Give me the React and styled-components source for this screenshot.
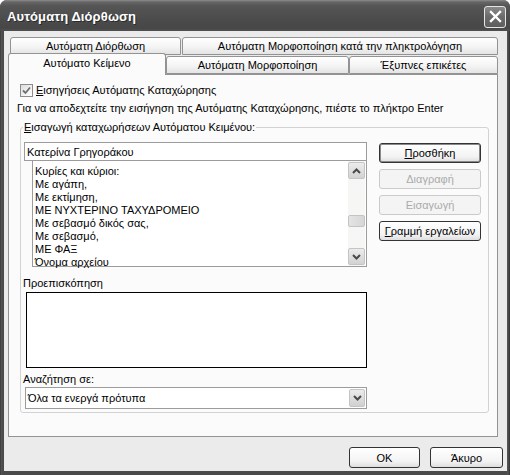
import styled, { createGlobalStyle } from 'styled-components';

const GlobalStyle = createGlobalStyle`
  html, body {
    margin: 0;
    padding: 0;
    background: #ffffff;
  }
  body {
    font-family: "Liberation Sans", "DejaVu Sans", sans-serif;
    font-size: 11px;
    color: #000;
  }
  * { box-sizing: border-box; }
`;

const entries = [
  'Κυρίες και κύριοι:',
  'Με αγάπη,',
  'Με εκτίμηση,',
  'ΜΕ ΝΥΧΤΕΡΙΝΟ ΤΑΧΥΔΡΟΜΕΙΟ',
  'Με σεβασμό δικός σας,',
  'Με σεβασμό,',
  'ΜΕ ΦΑΞ',
  'Όνομα αρχείου',
];

function Chevron({ down }) {
  return (
    <svg width="9" height="6" viewBox="0 0 9 6">
      <polyline
        points={down ? '1,1 4.5,4.5 8,1' : '1,5 4.5,1.5 8,5'}
        fill="none"
        stroke="#4a4a4a"
        strokeWidth="2"
      />
    </svg>
  );
}

function App() {
  return (
    <>
      <GlobalStyle />
      <Window>
        <TitleBar>
          <Title>Αυτόματη Διόρθωση</Title>
          <CloseButton>
            <svg width="13" height="13" viewBox="0 0 13 13">
              <path d="M2 2 L11 11 M11 2 L2 11" stroke="#fff" strokeWidth="2.4" strokeLinecap="square" />
            </svg>
          </CloseButton>
        </TitleBar>

        <Body>
          <TabRow>
            <Tab $w={171}>Αυτόματη Διόρθωση</Tab>
            <Tab $w={316}>Αυτόματη Μορφοποίηση κατά την πληκτρολόγηση</Tab>
          </TabRow>
          <TabRow $front>
            <Tab $w={158} $active>Αυτόματο Κείμενο</Tab>
            <Tab $w={183}>Αυτόματη Μορφοποίηση</Tab>
            <Tab $w={149}>Έξυπνες επικέτες</Tab>
          </TabRow>

          <Panel>
            <CheckRow>
              <CheckBox>
                <svg width="9" height="9" viewBox="0 0 9 9">
                  <polyline points="1,4.5 3.5,7 8,1.5" fill="none" stroke="#707070" strokeWidth="1.8" />
                </svg>
              </CheckBox>
              <span><u>Ε</u>ισηγήσεις Αυτόματης Καταχώρησης</span>
            </CheckRow>
            <Hint>Για να αποδεχτείτε την εισήγηση της Αυτόματης Καταχώρησης, πιέστε το πλήκτρο Enter</Hint>

            <Group>
              <Legend><u>Ε</u>ισαγωγή καταχωρήσεων Αυτόματου Κειμένου:</Legend>
              <GroupGrid>
                <LeftCol>
                  <TextField>Κατερίνα Γρηγοράκου</TextField>
                  <ListBox>
                    <Items>
                      {entries.map((e) => (
                        <Item key={e}>{e}</Item>
                      ))}
                    </Items>
                    <ScrollBar>
                      <ScrollArrow><Chevron /></ScrollArrow>
                      <Track>
                        <Thumb $offset={36} />
                      </Track>
                      <ScrollArrow><Chevron down /></ScrollArrow>
                    </ScrollBar>
                  </ListBox>
                  <FieldLabel $gap={10}>Προεπισκόπηση</FieldLabel>
                  <Preview />
                  <FieldLabel $gap={5}>Αναζήτηση σε:</FieldLabel>
                  <Combo>
                    <span>Όλα τα ενεργά πρότυπα</span>
                    <DropButton><Chevron down /></DropButton>
                  </Combo>
                </LeftCol>
                <RightCol>
                  <Button $default><u>Π</u>ροσθήκη</Button>
                  <Button disabled>Διαγραφή</Button>
                  <Button disabled>Εισαγωγή</Button>
                  <Button><u>Γ</u>ραμμή εργαλείων</Button>
                </RightCol>
              </GroupGrid>
            </Group>
          </Panel>

          <Footer>
            <Button $w={71} $h={21}>OK</Button>
            <Button $w={73} $h={21}>Άκυρο</Button>
          </Footer>
        </Body>
      </Window>
    </>
  );
}

export default App;

/* ---------- window chrome ---------- */

const Window = styled.div`
  width: 510px;
  height: 475px;
  display: flex;
  flex-direction: column;
  background: linear-gradient(to right, #2e2e2e 0, #555 1px, #4a4a4a 3px, #4a4a4a 506px, #555 508px, #2e2e2e 510px);
  border-radius: 7px 7px 0 0;
  overflow: hidden;
`;

const TitleBar = styled.div`
  height: 31px;
  flex: none;
  display: flex;
  align-items: center;
  justify-content: space-between;
  padding: 2px 4px 0 7px;
  background: linear-gradient(to bottom, #8c8c8c 0, #666 2px, #555 6px, #4b4b4b 20px, #474747 28px, #505050 31px);
`;

const Title = styled.div`
  color: #fff;
  font-weight: bold;
  font-size: 13px;
  text-shadow: 1px 1px 0 #2a2a2a;
  letter-spacing: 0.1px;
`;

const CloseButton = styled.div`
  width: 22px;
  height: 22px;
  display: flex;
  align-items: center;
  justify-content: center;
  border: 1px solid #e6e6e6;
  border-radius: 3px;
  background: linear-gradient(to bottom, #8a8a8a, #6a6a6a 50%, #5e5e5e);
`;

const Body = styled.div`
  flex: 1;
  margin: 0 3px 4px 4px;
  padding: 6px 4px 0 4px;
  background: #ebebeb;
  display: flex;
  flex-direction: column;
`;

/* ---------- tabs ---------- */

const TabRow = styled.div`
  display: flex;
  align-items: flex-end;
  gap: ${(p) => (p.$front ? '0' : '1px')};
  height: ${(p) => (p.$front ? '21px' : '18px')};
  margin-top: ${(p) => (p.$front ? '-2px' : '0')};
  padding-left: ${(p) => (p.$front ? '0' : '2px')};
  position: relative;
  z-index: ${(p) => (p.$front ? 2 : 1)};
`;

const Tab = styled.div`
  width: ${(p) => p.$w}px;
  height: ${(p) => (p.$active ? '22px' : p.$w && p.$w > 0 ? '18px' : '18px')};
  margin-bottom: ${(p) => (p.$active ? '-1px' : '0')};
  border: 1px solid #939393;
  border-bottom: ${(p) => (p.$active ? 'none' : '1px solid #939393')};
  border-radius: 3px 3px 0 0;
  background: ${(p) =>
    p.$active ? '#fbfbfb' : 'linear-gradient(to bottom, #ffffff, #f4f4f4 55%, #e4e4e4)'};
  display: flex;
  align-items: center;
  justify-content: center;
  padding-bottom: ${(p) => (p.$active ? '3px' : '0')};
  white-space: nowrap;
  position: relative;
  z-index: ${(p) => (p.$active ? 3 : 1)};
`;

const Panel = styled.div`
  width: 490px;
  height: 363px;
  flex: none;
  border: 1px solid #939393;
  background: #fbfbfb;
  padding: 9px 8px 0 8px;
`;

/* ---------- panel content ---------- */

const CheckRow = styled.div`
  display: flex;
  align-items: center;
  gap: 3px;
  height: 13px;
  margin-left: 3px;
  line-height: 13px;
`;

const CheckBox = styled.div`
  width: 13px;
  height: 13px;
  border: 1px solid #8c8c8c;
  background: linear-gradient(135deg, #dcdcdc, #f6f6f6 70%, #fff);
  display: flex;
  align-items: center;
  justify-content: center;
`;

const Hint = styled.div`
  margin-top: 5px;
  line-height: 13px;
  white-space: nowrap;
`;

const Group = styled.fieldset`
  margin: 6px 0 0 3px;
  width: 469px;
  padding: 0 3px 3px 3px;
  border: 1px solid #d2d2d2;
  border-radius: 3px;
  min-width: 0;
`;

const Legend = styled.legend`
  padding: 0 1px;
  margin-left: -1px;
  line-height: 13px;
  color: #000;
`;

const GroupGrid = styled.div`
  display: grid;
  grid-template-columns: 343px 102px;
  column-gap: 12px;
  padding-top: 8px;
`;

const LeftCol = styled.div`
  display: flex;
  flex-direction: column;
`;

const RightCol = styled.div`
  display: flex;
  flex-direction: column;
  gap: 6px;
  padding-top: 1px;
`;

const TextField = styled.div`
  height: 19px;
  border: 1px solid #9c9c9c;
  background: #fff;
  padding-left: 2px;
  display: flex;
  align-items: center;
`;

const ListBox = styled.div`
  height: 106px;
  margin-left: 8px;
  border: 1px solid #9c9c9c;
  border-top: none;
  background: #fff;
  display: flex;
`;

const Items = styled.div`
  flex: 1;
  padding: 4px 0 0 2px;
`;

const Item = styled.div`
  height: 13px;
  line-height: 13px;
  white-space: nowrap;
`;

const ScrollBar = styled.div`
  width: 17px;
  display: flex;
  flex-direction: column;
  padding: 1px 0;
  margin-right: 1px;
  background: #f6f6f4;
`;

const ScrollArrow = styled.div`
  width: 17px;
  height: 17px;
  border: 1px solid #c4c4c4;
  border-radius: 2px;
  background: linear-gradient(to bottom, #ececec, #d2d2d2);
  display: flex;
  align-items: center;
  justify-content: center;
`;

const Track = styled.div`
  flex: 1;
`;

const Thumb = styled.div`
  margin-top: ${(p) => p.$offset}px;
  height: 12px;
  border: 1px solid #c4c4c4;
  border-radius: 2px;
  background: linear-gradient(to right, #e4e4e4, #d6d6d6);
`;

const FieldLabel = styled.div`
  margin-top: ${(p) => p.$gap}px;
  margin-left: -1px;
  line-height: 13px;
`;

const Preview = styled.div`
  height: 76px;
  margin: 2px 0 0 2px;
  border: 1px solid #000;
  background: #fff;
`;

const Combo = styled.div`
  height: 22px;
  margin-top: 1px;
  margin-left: 1px;
  border: 1px solid #9c9c9c;
  background: #fff;
  display: flex;
  align-items: center;
  justify-content: space-between;
  padding: 1px 1px 1px 2px;
`;

const DropButton = styled.div`
  width: 16px;
  height: 18px;
  border: 1px solid #c4c4c4;
  border-radius: 2px;
  background: linear-gradient(to bottom, #ececec, #d0d0d0);
  display: flex;
  align-items: center;
  justify-content: center;
`;

const Button = styled.button`
  width: ${(p) => (p.$w ? p.$w : 102)}px;
  height: ${(p) => (p.$h ? p.$h : 20)}px;
  padding: 0;
  font-family: inherit;
  font-size: 11px;
  color: #000;
  border: 1px solid #333;
  border-radius: 3px;
  background: linear-gradient(to bottom, #ffffff, #f3f3f3 70%, #dedede);
  box-shadow: ${(p) => (p.$default ? 'inset 0 0 0 1px #8a8a8a' : 'none')};

  &:disabled {
    color: #ababab;
    border-color: #cacaca;
    background: #f4f4f4;
  }
`;

const Footer = styled.div`
  display: flex;
  justify-content: flex-end;
  gap: 10px;
  margin-top: 10px;
  padding-right: 0;
`;
